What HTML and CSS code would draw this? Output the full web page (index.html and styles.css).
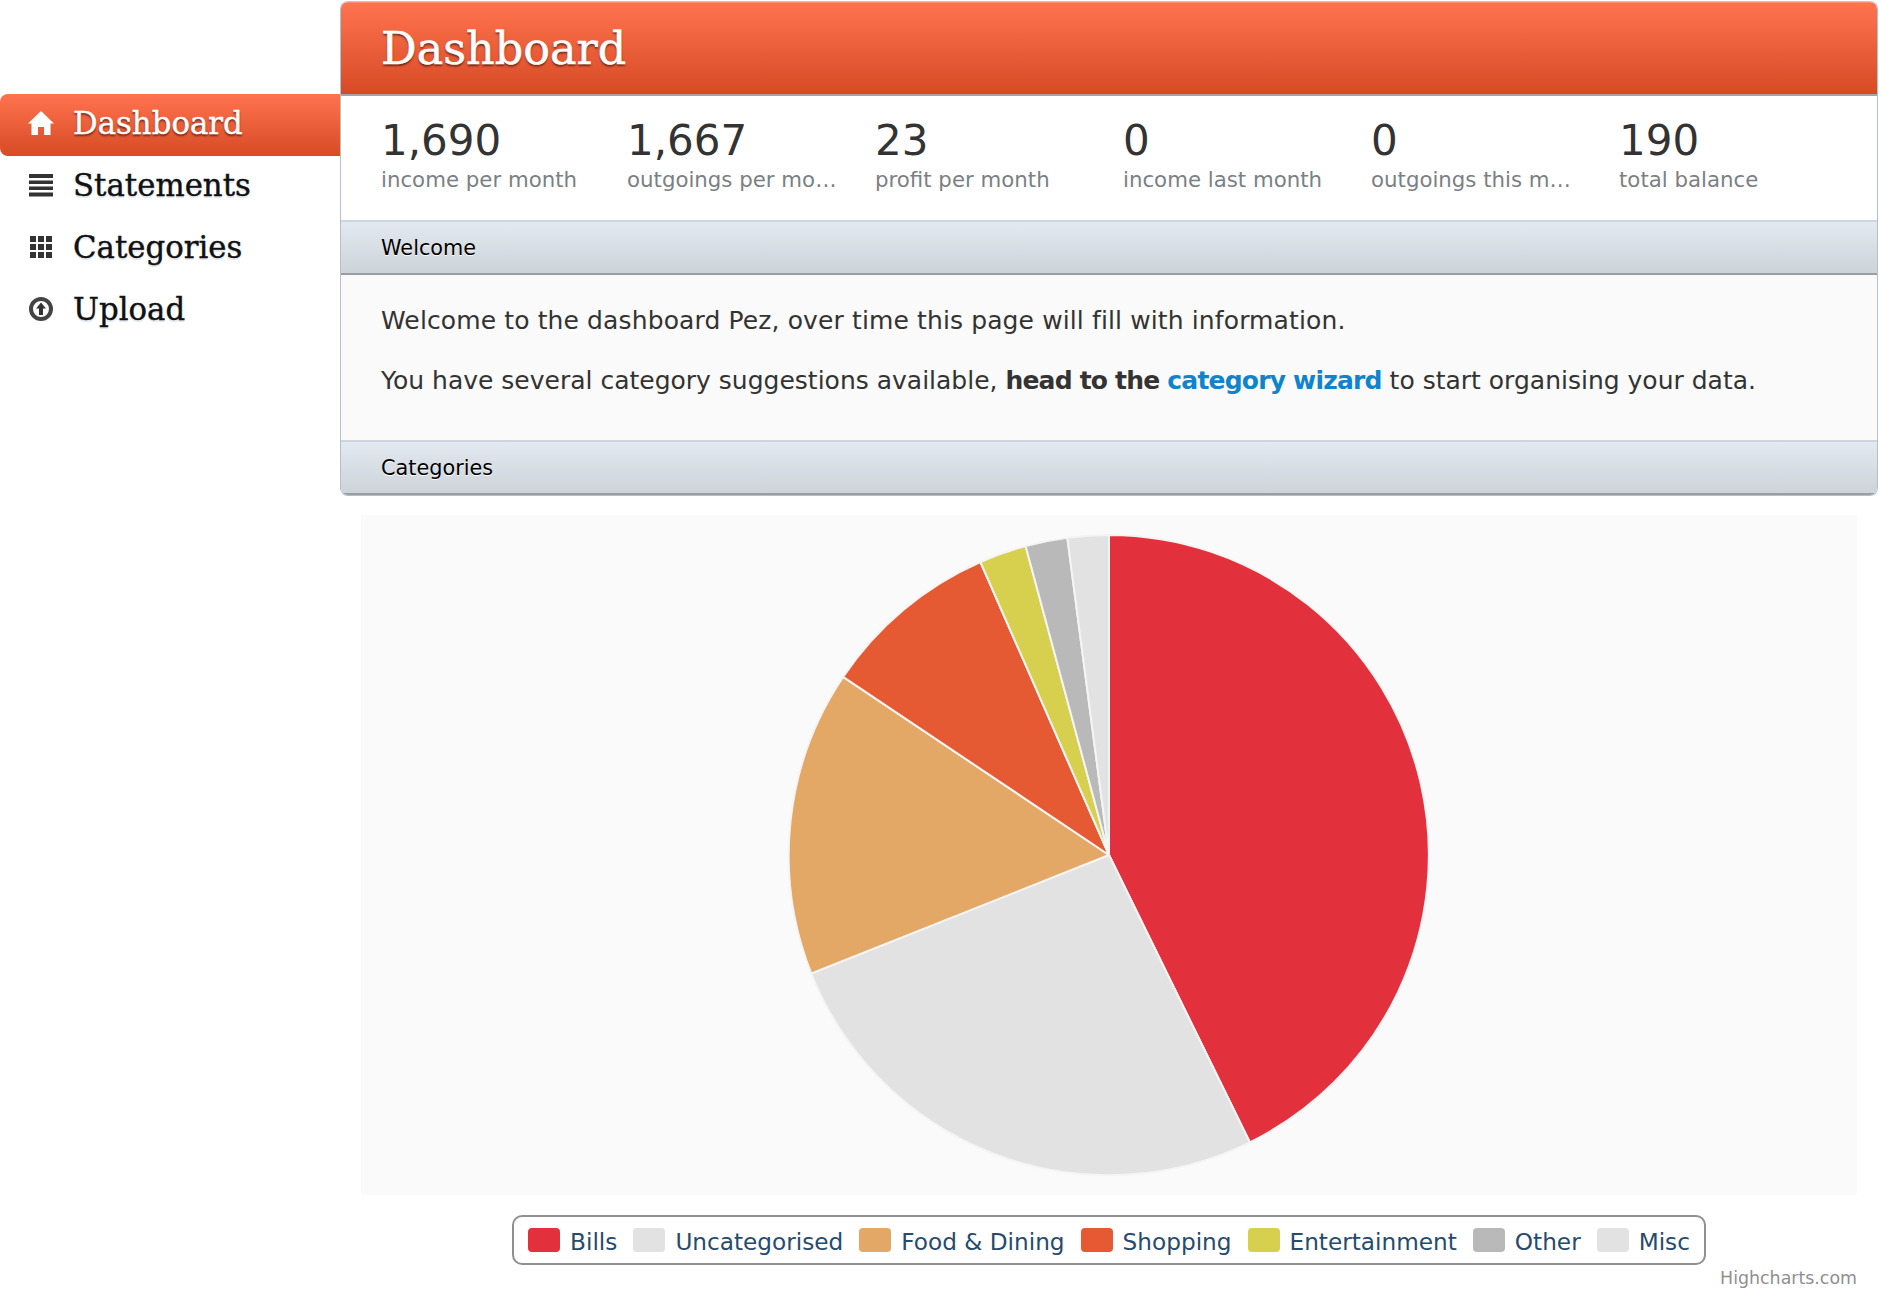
FILE: index.html
```html
<!DOCTYPE html>
<html lang="en">
<head>
<meta charset="utf-8">
<title>Dashboard</title>
<link rel="stylesheet" href="styles.css">
</head>
<body>
<div class="layout">
  <aside class="sidebar">
    <nav class="nav">
      <a class="nav-item active" href="#">
        <svg class="nav-icon" viewBox="0 0 26 26"><path d="M13 1 L26 13.5 L22.5 13.5 L22.5 25 L16 25 L16 17 L10 17 L10 25 L3.5 25 L3.5 13.5 L0 13.5 Z" fill="#fff"/></svg>
        <span>Dashboard</span>
      </a>
      <a class="nav-item" href="#">
        <svg class="nav-icon" viewBox="0 0 26 26"><path d="M1 2h24v4H1zM1 8.5h24v3.5H1zM1 14.500h24v3.500H1zM1 20.500h24v4H1z" fill="#333"/></svg>
        <span>Statements</span>
      </a>
      <a class="nav-item" href="#">
        <svg class="nav-icon" viewBox="0 0 26 26"><path d="M2 2h6v6H2zM10 2h6v6h-6zM18 2h6v6h-6zM2 10h6v6H2zM10 10h6v6h-6zM18 10h6v6h-6zM2 18h6v6H2zM10 18h6v6h-6zM18 18h6v6h-6z" fill="#333"/></svg>
        <span>Categories</span>
      </a>
      <a class="nav-item" href="#">
        <svg class="nav-icon" viewBox="0 0 26 26"><circle cx="13" cy="13" r="10" fill="none" stroke="#444" stroke-width="4"/><path d="M13 6.500 L18 12.500 L15 12.500 L15 19 L11 19 L11 12.500 L8 12.500 Z" fill="#333"/></svg>
        <span>Upload</span>
      </a>
    </nav>
  </aside>
  <main class="main">
    <section class="panel">
      <header class="panel-head"><h1>Dashboard</h1></header>
      <div class="stats">
        <div class="stat"><div class="stat-num">1,690</div><div class="stat-label">income per month</div></div>
        <div class="stat"><div class="stat-num">1,667</div><div class="stat-label">outgoings per mo…</div></div>
        <div class="stat"><div class="stat-num">23</div><div class="stat-label">profit per month</div></div>
        <div class="stat"><div class="stat-num">0</div><div class="stat-label">income last month</div></div>
        <div class="stat"><div class="stat-num">0</div><div class="stat-label">outgoings this m…</div></div>
        <div class="stat"><div class="stat-num">190</div><div class="stat-label">total balance</div></div>
      </div>
      <h2 class="section-head">Welcome</h2>
      <div class="welcome">
        <p class="intro">Welcome to the dashboard Pez, over time this page will fill with information.</p>
        <p>You have several category suggestions available, <strong>head to the <a href="#">category wizard</a></strong> to start organising your data.</p>
      </div>
      <h2 class="section-head">Categories</h2>
    </section>
    <section class="chart">
      <div class="plot">
        <svg class="pie" viewBox="0 0 1496 680">
          <g stroke="#f4f4f4" stroke-width="2" stroke-linejoin="round">
            <path fill="#e2313d" d="M748 340 L748 20 A320 320 0 0 1 888.800 627.300 Z"/>
            <path fill="#e2e2e2" d="M748 340 L888.800 627.300 A320 320 0 0 1 450.300 458.500 Z"/>
            <path fill="#e3a766" d="M748 340 L450.300 458.500 A320 320 0 0 1 482.100 161.900 Z"/>
            <path fill="#e55a33" d="M748 340 L482.100 161.900 A320 320 0 0 1 619.400 47 Z"/>
            <path fill="#d7cf4e" d="M748 340 L619.400 47 A320 320 0 0 1 664.600 31 Z"/>
            <path fill="#b9b9b9" d="M748 340 L664.600 31 A320 320 0 0 1 706.300 22.700 Z"/>
            <path fill="#e2e2e2" d="M748 340 L706.300 22.700 A320 320 0 0 1 748 20 Z"/>
          </g>
        </svg>
      </div>
      <ul class="legend">
        <li class="legend-item"><i class="swatch c-bills"></i><span class="legend-text">Bills</span></li>
        <li class="legend-item"><i class="swatch c-grey"></i><span class="legend-text">Uncategorised</span></li>
        <li class="legend-item"><i class="swatch c-food"></i><span class="legend-text">Food &amp; Dining</span></li>
        <li class="legend-item"><i class="swatch c-shop"></i><span class="legend-text">Shopping</span></li>
        <li class="legend-item"><i class="swatch c-ent"></i><span class="legend-text">Entertainment</span></li>
        <li class="legend-item"><i class="swatch c-other"></i><span class="legend-text">Other</span></li>
        <li class="legend-item"><i class="swatch c-grey"></i><span class="legend-text">Misc</span></li>
      </ul>
      <div class="credit">Highcharts.com</div>
    </section>
  </main>
</div>
</body>
</html>
```
FILE: styles.css
```css
* { box-sizing: border-box; }
html, body { margin: 0; padding: 0; background: #fff; }
body { font-family: "DejaVu Sans", sans-serif; color: #333; }
.layout { display: flex; align-items: flex-start; height: 1296px; overflow: hidden; }
.sidebar { flex: 0 0 340px; padding-top: 94px; }
.nav { display: flex; flex-direction: column; }
.nav-item {
  display: flex; align-items: center; gap: 19px;
  height: 62px; padding: 0 0 4px 28px;
  font: 30.8px "DejaVu Serif", serif; color: #111; text-decoration: none;
  -webkit-text-stroke: .4px currentColor;
  text-shadow: 0 2px 1px #dfe6ee;
}
.nav-item.active {
  color: #fff;
  border-radius: 8px 0 0 8px;
  background: linear-gradient(#ff7350, #d64a24);
  text-shadow: 0 2px 2px rgba(70, 25, 10, .75);
}
.nav-icon { width: 26px; height: 26px; flex: none; }
.main { flex: 1; min-width: 0; }
.panel {
  margin: 1px 1px 0 0;
  border: 1px solid #b4c0cc; border-top-color: #c8c8c8;
  border-radius: 8px;
  overflow: hidden;
}
.panel-head {
  height: 94px; padding-left: 40px;
  display: flex; align-items: center;
  background: linear-gradient(#ff7350, #d64a24);
  border-top: 1px solid #ff8a6c;
  border-bottom: 2px solid #a5a5a5;
}
.panel-head h1 {
  margin: 0; font: 400 44.5px "DejaVu Serif", serif; color: #fff;
  -webkit-text-stroke: .5px #fff;
  text-shadow: 0 2px 2px rgba(70, 25, 10, .75);
}
.stats {
  display: grid; grid-template-columns: 246px repeat(5, 248px);
  height: 124px; padding: 20px 0 0 40px; background: #fff;
}
.stat { min-width: 0; }
.stat-num { font-size: 42px; line-height: 50px; color: #333; }
.stat-label { font-size: 21.3px; line-height: 28px; color: #7b8085; white-space: nowrap; }
.section-head {
  margin: 0; height: 55px; padding-left: 40px;
  display: flex; align-items: center;
  font-size: 20.8px; font-weight: 400; color: #000;
  background: linear-gradient(#e2e9f0, #ccd3d9);
  border-top: 2px solid #cdd6de;
  border-bottom: 2px solid #9a9ea3;
  text-shadow: 0 1px 0 #fff;
}
.welcome { height: 165px; padding: 28px 0 0 40px; background: #fafafa; }
.welcome p { margin: 0 0 24px; font-size: 25px; line-height: 36px; color: #333; }
.welcome .intro { letter-spacing: .12px; }
.welcome strong { letter-spacing: -.8px; }
.welcome a { color: #0f83cc; text-decoration: none; }
.chart { padding: 19px 22px 0 21px; }
.plot { background: #fafafa; height: 680px; }
.pie { display: block; width: 100%; height: 100%; }
.legend {
  display: flex; align-items: center; justify-content: center;
  width: max-content; height: 50px;
  margin: 20px auto 0; padding: 0 14px;
  list-style: none;
  border: 2px solid #909090; border-radius: 10px;
  font-size: 23.2px; color: #274b6d;
}
.legend-item { display: flex; align-items: center; gap: 10px; margin-right: 16px; }
.legend-item:last-child { margin-right: 0; }
.legend-text { padding-top: 3px; }
.swatch { width: 32px; height: 24px; border-radius: 4px; }
.c-bills { background: #e2313d; }
.c-grey { background: #e2e2e2; }
.c-food { background: #e3a766; }
.c-shop { background: #e55a33; }
.c-ent { background: #d7cf4e; }
.c-other { background: #b9b9b9; }
.credit { margin-top: 3px; text-align: right; font-size: 17.400px; color: #909090; }
```
